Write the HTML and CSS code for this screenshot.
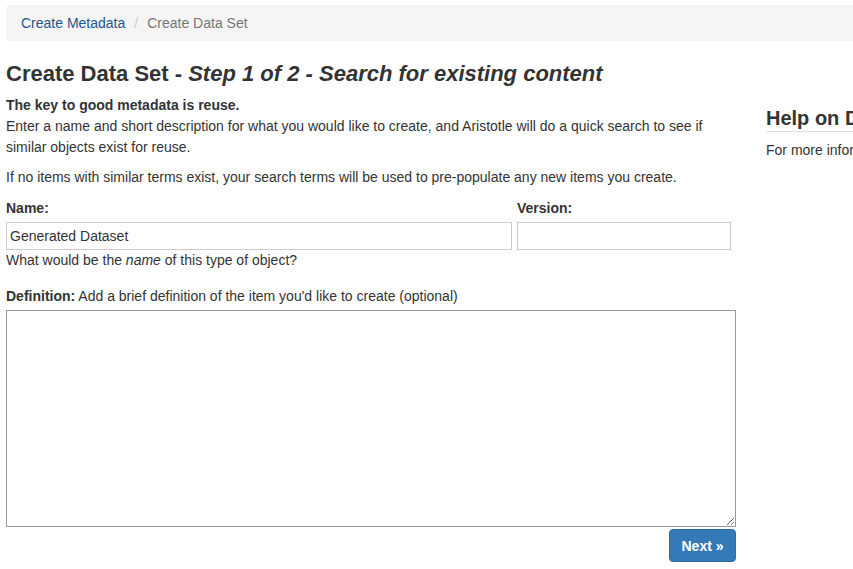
FILE: index.html
```html
<!DOCTYPE html>
<html>
<head>
<meta charset="utf-8">
<link rel="stylesheet" href="styles.css">
</head>
<body>
<div class="page">
  <ol class="breadcrumb">
    <li><a href="#">Create Metadata</a></li>
    <li class="sep">/</li>
    <li class="active">Create Data Set</li>
  </ol>
  <h1 class="title">Create Data Set - <em>Step 1 of 2 - Search for existing content</em></h1>
  <div class="columns">
    <div class="main">
      <p class="intro"><strong>The key to good metadata is reuse.</strong><br>Enter a name and short description for what you would like to create, and Aristotle will do a quick search to see if similar objects exist for reuse.</p>
      <p class="intro2">If no items with similar terms exist, your search terms will be used to pre-populate any new items you create.</p>
      <div class="row">
        <div class="field name-field">
          <label>Name:</label>
          <input type="text" value="Generated Dataset">
        </div>
        <div class="field version-field">
          <label>Version:</label>
          <input type="text" value="">
        </div>
      </div>
      <div class="help">What would be the <em>name</em> of this type of object?</div>
      <div class="def-label"><strong>Definition:</strong> Add a brief definition of the item you'd like to create (optional)</div>
      <textarea class="def"></textarea>
      <div class="actions"><button class="btn">Next &raquo;</button></div>
    </div>
    <div class="side">
      <h3 class="side-title">Help on Data Sets</h3>
      <p class="side-text">For more information on data sets</p>
    </div>
  </div>
</div>
</body>
</html>
```
FILE: styles.css
```css
html, body { margin: 0; padding: 0; }
body {
  font-family: "Liberation Sans", Arial, sans-serif;
  font-size: 14px;
  color: #333;
  background: #fff;
  overflow: hidden;
}
.page { padding: 5px 0 0 6px; width: 1000px; }
.breadcrumb {
  list-style: none;
  margin: 0;
  padding: 0 15px;
  height: 36px;
  display: flex;
  align-items: center;
  background: #f5f5f5;
  border-radius: 4px;
  gap: 9px;
}
.breadcrumb a { color: #23578f; text-decoration: none; }
.breadcrumb .sep { color: #ccc; }
.breadcrumb .active { color: #777; }
.title {
  font-size: 22px;
  font-weight: bold;
  margin: 20px 0 8px;
  line-height: 26px;
  color: #333;
}
.columns { display: flex; }
.main { width: 730px; }
.intro { margin: 0 0 9px; line-height: 21px; }
.intro2 { margin: 0 0 10px; line-height: 21px; }
.row { display: flex; gap: 5px; }
.field label { display: block; font-weight: bold; line-height: 20px; margin-bottom: 4px; }
.field input {
  box-sizing: border-box;
  height: 28px;
  border: 1px solid #ccc;
  padding: 0 3px;
  font: inherit;
  color: #333;
  margin: 0;
}
.name-field input { width: 506px; }
.version-field input { width: 214px; }
.help { line-height: 20px; margin-top: 0; }
.def-label { margin-top: 16px; line-height: 20px; }
.def {
  display: block;
  box-sizing: border-box;
  width: 730px;
  height: 217px;
  margin: 4px 0 0;
  border: 1px solid #999;
  resize: both;
}
.actions { display: flex; justify-content: flex-end; margin-top: 2px; }
.btn {
  background: #337ab7;
  color: #fff;
  border: 1px solid #2e6da4;
  border-radius: 4px;
  font: inherit;
  font-size: 14px;
  font-weight: bold;
  padding: 0 6px;
  height: 33px;
  width: 67px;
}
.side { margin-left: 30px; white-space: nowrap; }
.side-title {
  font-size: 20px;
  font-weight: bold;
  margin: 11px 0 0;
  padding-bottom: 1px;
  border-bottom: 1px solid #ddd;
  line-height: 24px;
}
.side-text { margin: 8px 0 0; line-height: 20px; }
```
